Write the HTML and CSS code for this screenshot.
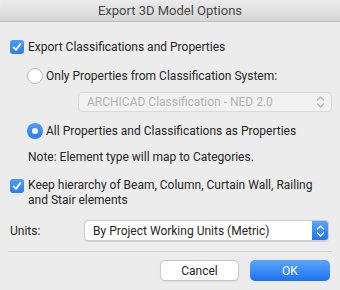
FILE: index.html
```html
<!DOCTYPE html>
<html>
<head>
<meta charset="utf-8">
<link rel="stylesheet" href="styles.css">
</head>
<body>
<div class="window">
  <div class="titlebar">Export 3D Model Options</div>
  <div class="content">
    <div class="row row-cb1">
      <span class="checkbox"><svg width="14" height="14" viewBox="0 0 14 14"><path d="M3.6 7.4 L6 9.9 L10.4 3.9" fill="none" stroke="#fff" stroke-width="1.8" stroke-linecap="round" stroke-linejoin="round"/></svg></span>
      <span class="label">Export Classifications and Properties</span>
    </div>
    <div class="row row-radio1">
      <span class="radio"></span>
      <span class="label">Only Properties from Classification System:</span>
    </div>
    <div class="popup disabled">
      <span class="popup-text">ARCHICAD Classification - NED 2.0</span>
      <svg class="arrows" width="9" height="14" viewBox="0 0 9 14"><path d="M1.5 5 L4.5 2 L7.5 5 M1.5 9 L4.5 12 L7.5 9" fill="none" stroke="#b4b4b4" stroke-width="1.3" stroke-linecap="round" stroke-linejoin="round"/></svg>
    </div>
    <div class="row row-radio2">
      <span class="radio checked"><span class="dot"></span></span>
      <span class="label">All Properties and Classifications as Properties</span>
    </div>
    <div class="note">Note: Element type will map to Categories.</div>
    <div class="row row-cb2">
      <span class="checkbox"><svg width="14" height="14" viewBox="0 0 14 14"><path d="M3.6 7.4 L6 9.9 L10.4 3.9" fill="none" stroke="#fff" stroke-width="1.8" stroke-linecap="round" stroke-linejoin="round"/></svg></span>
      <span class="label multi">Keep hierarchy of Beam, Column, Curtain Wall, Railing<br>and Stair elements</span>
    </div>
    <div class="units-row">
      <span class="units-label">Units:</span>
      <div class="popup active">
        <span class="popup-text">By Project Working Units (Metric)</span>
        <span class="stepper"><svg width="9" height="14" viewBox="0 0 9 14"><path d="M1.5 5 L4.5 2 L7.5 5 M1.5 9 L4.5 12 L7.5 9" fill="none" stroke="#fff" stroke-width="1.4" stroke-linecap="round" stroke-linejoin="round"/></svg></span>
      </div>
    </div>
  </div>
  <div class="separator"></div>
  <div class="buttons">
    <button class="btn cancel">Cancel</button>
    <button class="btn ok">OK</button>
  </div>
</div>
</body>
</html>
```
FILE: styles.css
```css
* { box-sizing: border-box; }
html, body { margin: 0; padding: 0; background: #ececec; }
body { font-family: Roboto, "Liberation Sans", sans-serif; font-size: 12px; color: #262626; }
.window { width: 340px; height: 290px; background: #ececec; overflow: hidden; }
.titlebar {
  height: 22px;
  line-height: 21px;
  text-align: center;
  font-size: 13px;
  color: #4a4a4a;
  background: linear-gradient(#ebebeb, #d6d6d6);
  border-bottom: 1px solid #bdbdbd;
  border-radius: 5px 5px 0 0;
}
.content { padding: 17px 10px 0 10px; display: flex; flex-direction: column; }
.row { display: flex; align-items: center; }
.label { line-height: 16px; }
.row-cb1 { height: 16px; }
.checkbox {
  width: 14px; height: 14px; flex: none;
  border-radius: 3px;
  background: linear-gradient(#4d9cf9, #2a7ef4);
  display: flex; align-items: center; justify-content: center;
  margin-right: 4px;
}
.checkbox svg { display: block; }
.row-radio1 { margin-top: 13px; margin-left: 17px; height: 16px; }
.radio {
  width: 16px; height: 16px; flex: none;
  border-radius: 50%;
  background: #fff;
  border: 1px solid #b9b9b9;
  margin-right: 3px;
  display: flex; align-items: center; justify-content: center;
}
.radio.checked { background: linear-gradient(#4d9cf9, #2a7ef4); border: none; }
.radio .dot { width: 6px; height: 6px; border-radius: 50%; background: #fff; }
.popup {
  display: flex; align-items: center;
  border-radius: 4px;
}
.popup.disabled {
  margin-top: 8px; margin-left: 68px;
  width: 254px; height: 20px;
  background: #f1f1f1;
  border: 1px solid #dadada;
  padding: 0 6px 0 8px;
  justify-content: space-between;
  color: #b3b3b3;
}
.row-radio2 { margin-top: 11px; margin-left: 17px; height: 16px; }
.note { margin-top: 10px; margin-left: 18px; line-height: 16px; }
.row-cb2 { margin-top: 13px; align-items: flex-start; }
.row-cb2 .checkbox { margin-top: 1px; }
.label.multi { line-height: 15px; }
.units-row { display: flex; align-items: center; margin-top: 12px; }
.units-label { width: 74px; }
.popup.active {
  width: 245px; height: 21px;
  background: #fff;
  border: 1px solid #cdcdcd;
  box-shadow: 0 0.5px 1px rgba(0,0,0,0.1);
  overflow: hidden;
}
.popup.active .popup-text { flex: 1; padding-left: 8px; }
.stepper {
  width: 16px; height: 100%;
  background: linear-gradient(#5aa6fb, #1f75f1);
  display: flex; align-items: center; justify-content: center;
}
.separator { margin: 10px 8px 0 8px; height: 1px; background: #d2d2d2; }
.buttons { display: flex; justify-content: flex-end; gap: 11px; padding: 8px 10px 0 0; }
.btn {
  font-family: inherit; font-size: 12px;
  height: 21px; border-radius: 5px; padding: 0;
}
.btn.cancel { width: 79px; background: #fff; border: 1px solid #c8c8c8; color: #262626; box-shadow: 0 0.5px 1px rgba(0,0,0,0.08); }
.btn.ok { width: 80px; background: linear-gradient(#5ba7fb, #1b72f0); border: none; color: #fff; }
```
